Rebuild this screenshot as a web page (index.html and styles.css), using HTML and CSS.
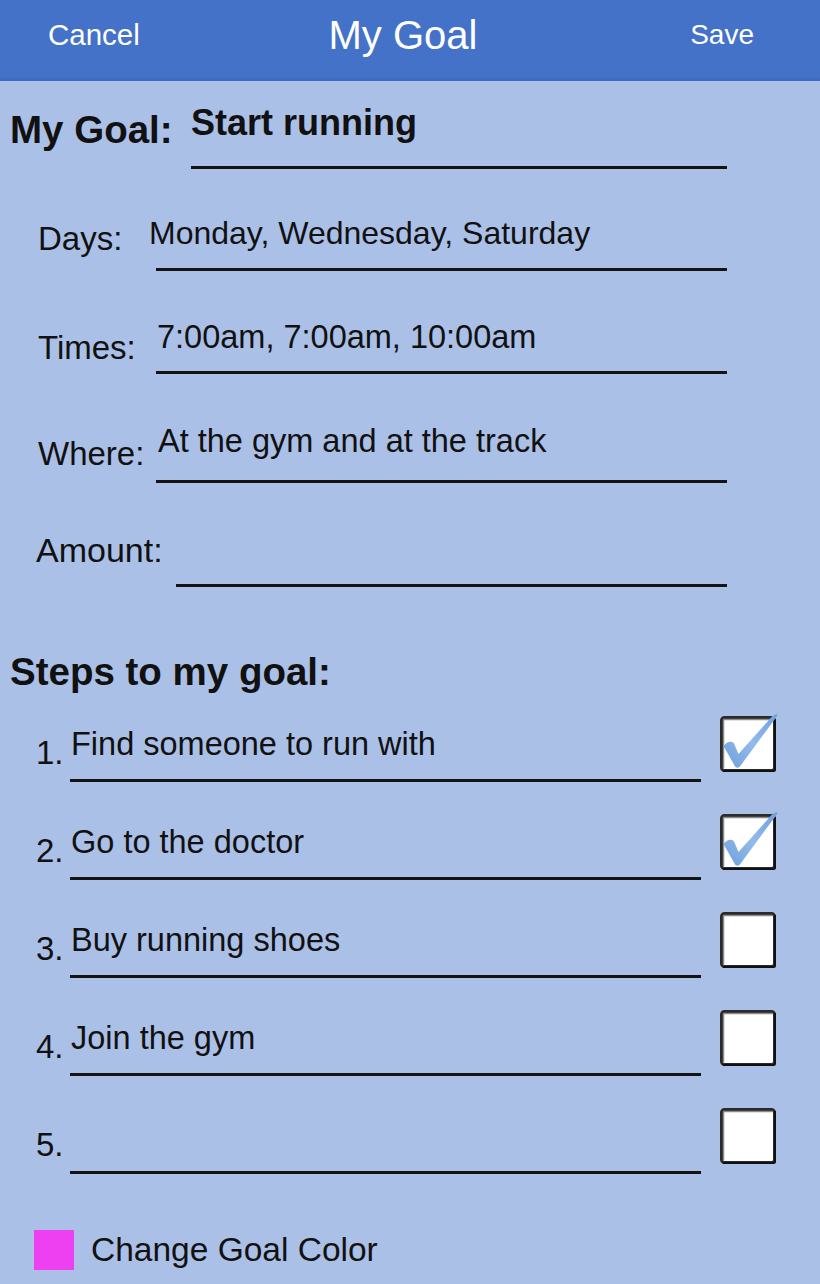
FILE: index.html
```html
<!DOCTYPE html>
<html lang="en">
<head>
<meta charset="utf-8">
<title>My Goal</title>
<link rel="stylesheet" href="styles.css">
</head>
<body>
<svg class="defs" width="0" height="0" aria-hidden="true">
  <defs>
    <linearGradient id="chk" x1="0" y1="1" x2="1" y2="0">
      <stop offset="0" stop-color="#6e9edb"/>
      <stop offset="0.5" stop-color="#93bbeb"/>
      <stop offset="1" stop-color="#6f9fdc"/>
    </linearGradient>
    <symbol id="box" viewBox="0 0 60 60">
      <rect x="2.5" y="2.5" width="53" height="53" rx="3" fill="#fff" stroke="#2a2a2a" stroke-width="3"/>
      <path d="M4.5 4.5 H53.5" stroke="#8a8a8a" stroke-width="1.5" fill="none"/>
      <path d="M4.5 4.5 V53.5" stroke="#8a8a8a" stroke-width="1.5" fill="none"/>
      <path d="M4 56 H54.5 Q56 56 56 54.5 V4" stroke="#111" stroke-width="2" fill="none"/>
    </symbol>
  </defs>
</svg>

<header class="topbar">
  <span class="topbar-btn topbar-left">Cancel</span>
  <h1 class="topbar-title">My Goal</h1>
  <span class="topbar-btn topbar-right">Save</span>
</header>

<main class="form">
  <div class="field field-goal">
    <span class="field-label">My Goal:</span>
    <span class="field-value">Start running</span>
  </div>
  <div class="field field-days">
    <span class="field-label">Days:</span>
    <span class="field-value">Monday, Wednesday, Saturday</span>
  </div>
  <div class="field field-times">
    <span class="field-label">Times:</span>
    <span class="field-value">7:00am, 7:00am, 10:00am</span>
  </div>
  <div class="field field-where">
    <span class="field-label">Where:</span>
    <span class="field-value">At the gym and at the track</span>
  </div>
  <div class="field field-amount">
    <span class="field-label">Amount:</span>
    <span class="field-value"></span>
  </div>

  <h2 class="steps-title">Steps to my goal:</h2>

  <div class="step">
    <span class="step-num">1.</span>
    <span class="step-line">Find someone to run with</span>
    <svg class="step-check" viewBox="0 0 60 60"><use href="#box"/><path d="M4.5 31 C8 26.5 12.5 25.5 15 28.5 L19.5 39 L53 1.5 C55 -0.5 58.5 -2 58.5 0.5 L22 50 C20 53.5 17 53.5 15.5 50.5 Z" fill="url(#chk)"/></svg>
  </div>
  <div class="step">
    <span class="step-num">2.</span>
    <span class="step-line">Go to the doctor</span>
    <svg class="step-check" viewBox="0 0 60 60"><use href="#box"/><path d="M4.5 31 C8 26.5 12.5 25.5 15 28.5 L19.5 39 L53 1.5 C55 -0.5 58.5 -2 58.5 0.5 L22 50 C20 53.5 17 53.5 15.5 50.5 Z" fill="url(#chk)"/></svg>
  </div>
  <div class="step">
    <span class="step-num">3.</span>
    <span class="step-line">Buy running shoes</span>
    <svg class="step-check" viewBox="0 0 60 60"><use href="#box"/></svg>
  </div>
  <div class="step">
    <span class="step-num">4.</span>
    <span class="step-line">Join the gym</span>
    <svg class="step-check" viewBox="0 0 60 60"><use href="#box"/></svg>
  </div>
  <div class="step">
    <span class="step-num">5.</span>
    <span class="step-line"></span>
    <svg class="step-check" viewBox="0 0 60 60"><use href="#box"/></svg>
  </div>

  <div class="color-row">
    <span class="color-swatch"></span>
    <span class="color-label">Change Goal Color</span>
  </div>
</main>
</body>
</html>
```

FILE: styles.css
```css
html, body {
  margin: 0;
  padding: 0;
}

body {
  background: #abc0e7;
  color: #111;
  font-family: "Liberation Sans", Arial, sans-serif;
  width: 820px;
  min-height: 1284px;
  overflow: hidden;
}

.defs {
  position: absolute;
  width: 0;
  height: 0;
}

/* Header */
.topbar {
  display: grid;
  grid-template-columns: 1fr auto 1fr;
  align-items: start;
  height: 78px;
  padding: 0 66px 0 48px;
  background: #4472c8;
  border-bottom: 3px solid #3d6ac2;
  color: #fff;
}

.topbar-btn {
  font-size: 29.5px;
  line-height: 34px;
  margin-top: 18px;
}

.topbar-right {
  justify-self: end;
  font-size: 28px;
}

.topbar-title {
  margin: 12px 0 0 4px;
  font-size: 40px;
  font-weight: normal;
  line-height: 46px;
}

/* Fields */
.field {
  display: flex;
  align-items: flex-start;
}

.field-label {
  flex: none;
  box-sizing: border-box;
  font-size: 33px;
  line-height: 36px;
}

.field-value {
  flex: none;
  box-sizing: border-box;
  font-size: 32.5px;
  line-height: 36px;
  border-bottom: 3px solid #141414;
  white-space: nowrap;
}

.field-goal .field-label {
  margin-left: 10px;
  width: 181px;
  padding-top: 27px;
  font-size: 38.5px;
  font-weight: bold;
  line-height: 44px;
}

.field-goal .field-value {
  width: 536px;
  padding: 21px 0 22px;
  font-size: 36px;
  font-weight: bold;
  line-height: 42px;
}

.field-days .field-label,
.field-times .field-label,
.field-where .field-label {
  margin-left: 38px;
  width: 118px;
}

.field-days .field-value,
.field-times .field-value,
.field-where .field-value {
  width: 571px;
}

.field-days .field-label { padding-top: 52px; }
.field-days .field-value { padding: 46px 0 17px 0; font-size: 32px; text-indent: -7px; }

.field-times .field-label { padding-top: 59px; }
.field-times .field-value { padding: 48px 0 16px 1px; }

.field-where .field-label { padding-top: 62px; }
.field-where .field-value { padding: 49px 0 21px 2px; }

.field-amount .field-label {
  margin-left: 36px;
  width: 140px;
  padding-top: 49px;
  font-size: 34px;
}

.field-amount .field-value {
  width: 551px;
  height: 104px;
}

/* Steps */
.steps-title {
  margin: 73px 0 0 10px;
  font-size: 38.5px;
  font-weight: bold;
  line-height: 24px;
}

.step {
  display: flex;
  align-items: flex-start;
  height: 98px;
}

.step-num {
  flex: none;
  margin-left: 36px;
  width: 34px;
  padding-top: 51px;
  font-size: 33px;
  line-height: 36px;
}

.step-line {
  flex: none;
  box-sizing: border-box;
  width: 631px;
  height: 98px;
  padding: 42px 0 0 1px;
  font-size: 32.5px;
  line-height: 36px;
  border-bottom: 3px solid #141414;
  white-space: nowrap;
}

.step-check {
  flex: none;
  width: 60px;
  height: 60px;
  margin: 31px 0 0 18px;
  overflow: visible;
}

/* Color */
.color-row {
  display: flex;
  align-items: center;
  gap: 17px;
  margin: 56px 0 0 34px;
}

.color-swatch {
  width: 40px;
  height: 40px;
  background: #ee3ff1;
}

.color-label {
  font-size: 33.5px;
  line-height: 40px;
}
```
